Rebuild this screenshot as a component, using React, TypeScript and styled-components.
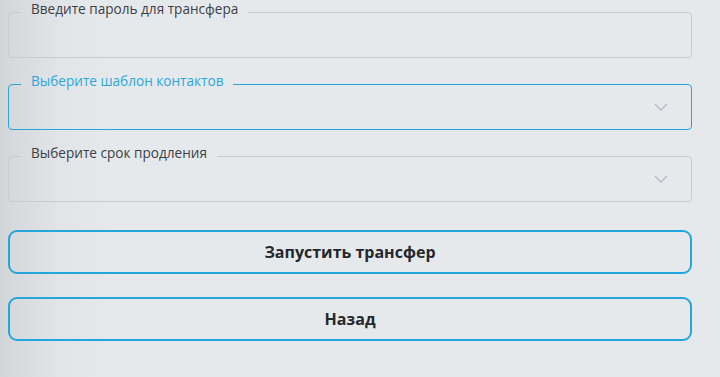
import { FC } from "react";
import styled, { createGlobalStyle } from "styled-components";

const GlobalStyle = createGlobalStyle`
html, body {
    margin: 0;
    padding: 0;
    height: 100%;
}
body {
    background: linear-gradient(90deg, #d3d6d9 0px, #e2e5e8 60px, #e6e9ec 110px, #e6e9ec 100%);
    font-family: "Open Sans", "Noto Sans", sans-serif;
}
`;

const Page = styled.div`
display: flex;
flex-direction: column;
width: 684px;
padding: 2px 0 0 8px;
`;

const Fields = styled.div`
display: flex;
flex-direction: column;
gap: 16px;
`;

const Field = styled.fieldset<{ $active?: boolean }>`
margin: 0;
padding: 0 12px;
border: 1px solid ${p => (p.$active ? "#28a6dc" : "#c6cdd1")};
border-radius: 4px;
min-width: 0;
& > legend {
    padding: 0 10px 6px;
    font-size: 13.6px;
    line-height: 14px;
    color: ${p => (p.$active ? "#2aa6dc" : "#3b4046")};
}
`;

const FieldBody = styled.div`
display: flex;
align-items: flex-start;
justify-content: flex-end;
box-sizing: border-box;
height: 35px;
padding: 9px 11px 0 0;
`;

const Buttons = styled.div`
display: flex;
flex-direction: column;
gap: 23px;
margin-top: 28px;
`;

const Button = styled.button`
height: 44px;
width: 100%;
background: transparent;
border: 2px solid #22a6dd;
border-radius: 9px;
font-family: "Open Sans", "Noto Sans", sans-serif;
font-weight: 700;
font-size: 16px;
color: #24282c;
cursor: pointer;
`;

const Chevron: FC = () => (
    <svg width="14" height="8" viewBox="0 0 14 8">
        <path d="M1 1 L7 7 L13 1" fill="none" stroke="#b3b8bc" strokeWidth="1.3" />
    </svg>
);

export const App: FC = () => {
    return (
        <>
            <GlobalStyle />
            <Page>
                <Fields>
                    <Field>
                        <legend>Введите пароль для трансфера</legend>
                        <FieldBody />
                    </Field>
                    <Field $active>
                        <legend>Выберите шаблон контактов</legend>
                        <FieldBody><Chevron /></FieldBody>
                    </Field>
                    <Field>
                        <legend>Выберите срок продления</legend>
                        <FieldBody><Chevron /></FieldBody>
                    </Field>
                </Fields>
                <Buttons>
                    <Button>Запустить трансфер</Button>
                    <Button>Назад</Button>
                </Buttons>
            </Page>
        </>
    );
};

export default App;
